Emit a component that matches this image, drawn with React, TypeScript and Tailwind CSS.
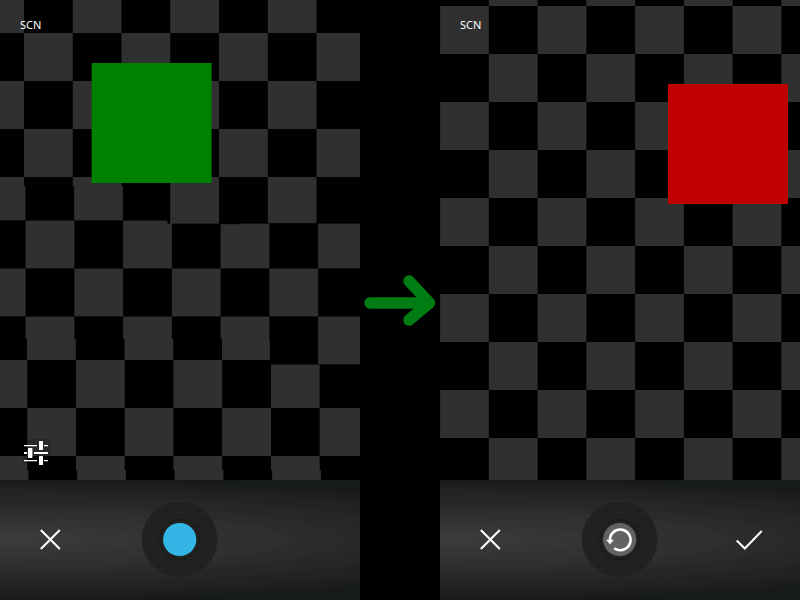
import type { ReactNode } from "react";

const PITCH = 48.75;

type Band = {
  top: number;
  bottom: number;
  offset: number;
  cells: number[];
};

// Each band is a strip of the checkerboard: cell k spans offset + k * PITCH.
const previewBands: Band[] = [
  { top: 0, bottom: 33, offset: 24, cells: [-1, 1, 3, 5] },
  { top: 33, bottom: 81, offset: 24, cells: [0, 2, 4, 6] },
  { top: 81, bottom: 129, offset: 24, cells: [-1, 1, 3, 5] },
  { top: 129, bottom: 177, offset: 24, cells: [0, 2, 4, 6] },
  { top: 177, bottom: 186, offset: 24, cells: [-1, 1] },
  { top: 186, bottom: 220.4, offset: 25.4, cells: [-1, 1] },
  { top: 177, bottom: 223.6, offset: 24, cells: [3] },
  { top: 177, bottom: 223.2, offset: 24, cells: [5] },
  { top: 220.6, bottom: 268.4, offset: 25.6, cells: [0, 2] },
  { top: 223.6, bottom: 268.4, offset: 25.6, cells: [4, 6] },
  { top: 268.6, bottom: 316.4, offset: 25.6, cells: [-1, 1, 3, 5] },
  { top: 316.6, bottom: 339, offset: 25.6, cells: [0, 2, 4] },
  { top: 339, bottom: 360, offset: 27, cells: [0, 2] },
  { top: 316.6, bottom: 364.4, offset: 25.6, cells: [6] },
  { top: 360, bottom: 408, offset: 27.2, cells: [-1, 1, 3] },
  { top: 364.6, bottom: 408, offset: 27.2, cells: [5] },
  { top: 408, bottom: 456, offset: 27.2, cells: [0, 2, 4, 6] },
  { top: 456, bottom: 470, offset: 27.2, cells: [-1, 1, 3, 5] },
  { top: 470, bottom: 480, offset: 28.4, cells: [-1, 1, 3, 5] },
];

const reviewBands: Band[] = Array.from({ length: 11 }, (_, row) => ({
  top: row * 48 - 42,
  bottom: row * 48 + 6,
  offset: 0.1,
  cells: row % 2 === 0 ? [1, 3, 5, 7] : [0, 2, 4, 6],
}));

function Checker({ bands, children }: { bands: Band[]; children: ReactNode }) {
  return (
    <svg
      viewBox="0 0 360 480"
      preserveAspectRatio="xMidYMid slice"
      className="absolute inset-0 h-full w-full bg-black"
      aria-hidden="true"
    >
      {bands.map((band) =>
        band.cells.map((k) => (
          <rect
            key={`${band.top}-${k}`}
            x={band.offset + k * PITCH}
            y={band.top}
            width={PITCH}
            height={band.bottom - band.top}
            fill="#303030"
          />
        )),
      )}
      {children}
    </svg>
  );
}

function Phone({ scene, overlay, footer }: { scene: ReactNode; overlay?: ReactNode; footer: ReactNode }) {
  return (
    <section className="flex flex-col">
      <div className="relative flex flex-1 flex-col justify-between overflow-hidden">
        {scene}
        <span className="relative px-5 pt-4 font-['Noto_Sans',sans-serif] text-[11px] leading-[18px] text-white">SCN</span>
        {overlay}
      </div>
      <footer className="grid h-[120px] grid-cols-[48px_1fr_48px] items-center border-b border-[#151917] bg-[radial-gradient(600px_61px_at_0_50%,#3a3b3a_0%,#383938_14%,#363636_15%,#353535_24%,#333333_25%,#323232_36%,#303030_37%,#2f2f2f_47%,#2b2c2b_49%,#2a2a2a_57%,#272827_59%,#262626_70%,#232423_72%,#212121_84%,#1e1f1e_87%,#1c1c1c_95%,#171b19_98%)] px-[26px] shadow-[inset_0_1px_0_#151917]">
        {footer}
      </footer>
    </section>
  );
}

function CancelButton() {
  return (
    <button type="button" aria-label="Cancel" className="flex size-12 items-center justify-center">
      <svg viewBox="0 0 24 24" className="size-6" fill="none" stroke="#fff" strokeWidth="2">
        <path d="M2.8 2 21.8 21M21.8 2 2.8 21" />
      </svg>
    </button>
  );
}

function ShutterButton({ label, color, children }: { label: string; color: string; children?: ReactNode }) {
  const id = `mesh-${label}`;
  return (
    <button type="button" aria-label={label} className="size-[76px] justify-self-center rounded-full">
      <svg viewBox="0 0 76 76" className="size-full">
        <defs>
          <pattern id={id} width="2.667" height="2.667" patternUnits="userSpaceOnUse">
            <rect width="2.667" height="2.667" fill="#242624" />
            <rect x="0.5" y="0.5" width="1.6" height="1.6" fill="#171918" />
          </pattern>
        </defs>
        <circle cx="37.7" cy="37.5" r="37.8" fill={`url(#${id})`} />
        <circle cx="37.7" cy="37.5" r="20.5" fill="#1a1b1a" />
        <circle cx="37.7" cy="37.5" r="18.8" fill="#212321" />
        <circle cx="37.7" cy="37.5" r="16.6" fill={color} />
        {children}
      </svg>
    </button>
  );
}

export default function App() {
  return (
    <main className="grid min-h-screen grid-cols-[9fr_2fr_9fr] bg-black">
      <Phone
        scene={
          <Checker bands={previewBands}>
            <path d="M222 339H269.8V360H222z" fill="#303030" />
            <path d="M166.5 220H170V223.7H168z" fill="#000" />
            <path d="M220 223h20v1.2h-20z" fill="#000" />
            <rect x="91.6" y="63" width="120" height="120" fill="#008000" />
          </Checker>
        }
        overlay={
          <button type="button" aria-label="Camera settings" className="relative mb-3 ml-5 size-8">
            <svg viewBox="0 0 32 32" className="size-8">
              <rect x="3" y="3" width="27" height="26" rx="3" fill="#000" opacity="0.15" />
              <g fill="#fff">
                <path d="M4 9h13v1.2H4zM24 9h4v1.2h-4zM4 16h3v2H4zM14 16h14v2H14zM4 24h13v1.2H4zM24 24h4v1.2h-4z" />
                <rect x="19" y="5" width="4" height="9" rx="0.6" />
                <rect x="8" y="12" width="4.4" height="10" rx="0.6" />
                <rect x="19" y="20" width="4" height="9" rx="0.6" />
              </g>
            </svg>
          </button>
        }
        footer={
          <>
            <CancelButton />
            <ShutterButton label="Capture" color="#33b5e5" />
          </>
        }
      />

      <div className="flex items-center justify-center">
        <svg viewBox="0 0 80 80" className="w-full" fill="none" stroke="#007d12" strokeWidth="11.4" strokeLinecap="round" strokeLinejoin="round" role="img" aria-label="then">
          <path d="M10 43H69M49 21 69.5 43 49 60" />
        </svg>
      </div>

      <Phone
        scene={
          <Checker bands={reviewBands}>
            <rect x="228" y="84" width="120" height="120" fill="#c00000" />
          </Checker>
        }
        footer={
          <>
            <CancelButton />
            <ShutterButton label="Retake" color="#616261">
              <path d="M32.2 46.2A10.3 10.3 0 1 0 28 39" fill="none" stroke="#fff" strokeWidth="2.6" />
              <path d="M24 37.8h8L28 42.3z" fill="#fff" />
            </ShutterButton>
            <button type="button" aria-label="Accept" className="flex size-12 items-center justify-center">
              <svg viewBox="0 0 28 24" className="h-6 w-7" fill="none" stroke="#fff" strokeWidth="2">
                <path d="M.7 12.5 8.8 20.5 25.7 3" />
              </svg>
            </button>
          </>
        }
      />
    </main>
  );
}
